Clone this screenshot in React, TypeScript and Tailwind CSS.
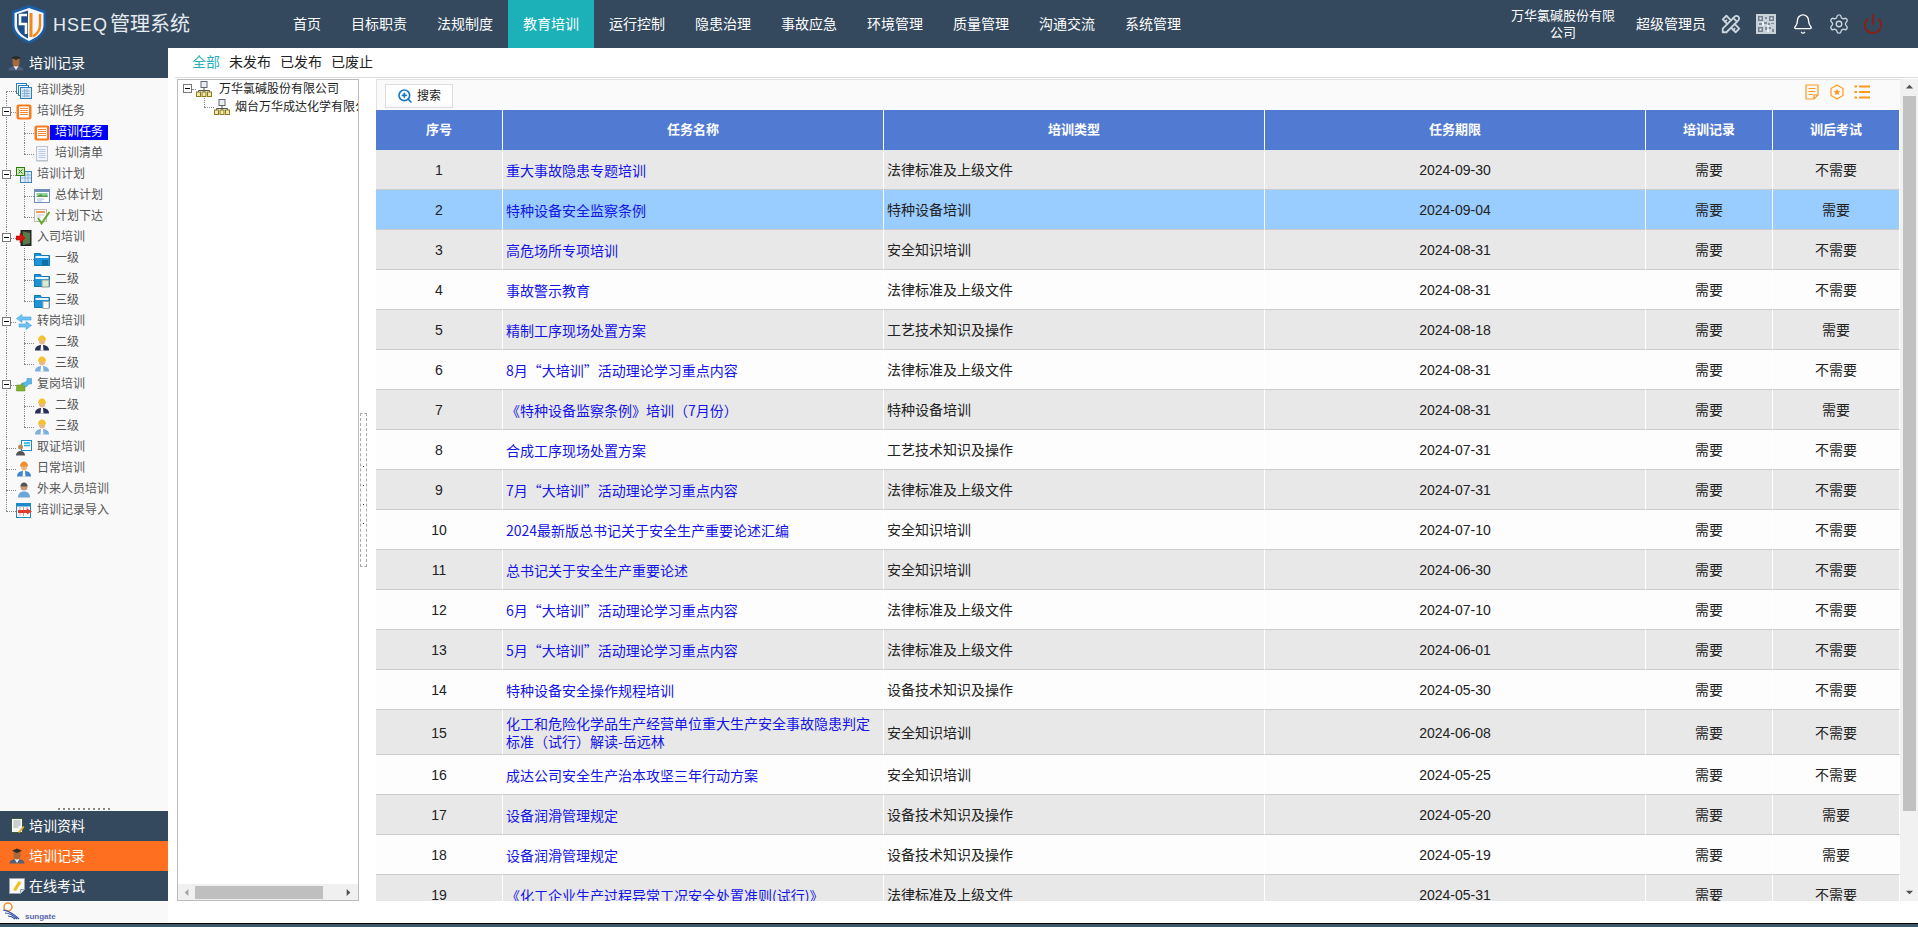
import type { ReactNode } from "react";
import { Bell, Power, Settings, ZoomIn } from "lucide-react";
import { TbTools } from "react-icons/tb";

const NAV = ["首页", "目标职责", "法规制度", "教育培训", "运行控制", "隐患治理", "事故应急", "环境管理", "质量管理", "沟通交流", "系统管理"];
const LAW = "法律标准及上级文件";
const SPECIAL = "特种设备培训";
const SAFE = "安全知识培训";
const CRAFT = "工艺技术知识及操作";
const EQUIP = "设备技术知识及操作";

// no, name, type, deadline, exam
const ROWS: [number, string, string, string, string][] = [
  [1, "重大事故隐患专题培训", LAW, "2024-09-30", "不需要"],
  [2, "特种设备安全监察条例", SPECIAL, "2024-09-04", "需要"],
  [3, "高危场所专项培训", SAFE, "2024-08-31", "不需要"],
  [4, "事故警示教育", LAW, "2024-08-31", "不需要"],
  [5, "精制工序现场处置方案", CRAFT, "2024-08-18", "需要"],
  [6, "8月“大培训”活动理论学习重点内容", LAW, "2024-08-31", "不需要"],
  [7, "《特种设备监察条例》培训（7月份）", SPECIAL, "2024-08-31", "需要"],
  [8, "合成工序现场处置方案", CRAFT, "2024-07-31", "不需要"],
  [9, "7月“大培训”活动理论学习重点内容", LAW, "2024-07-31", "不需要"],
  [10, "2024最新版总书记关于安全生产重要论述汇编", SAFE, "2024-07-10", "不需要"],
  [11, "总书记关于安全生产重要论述", SAFE, "2024-06-30", "不需要"],
  [12, "6月“大培训”活动理论学习重点内容", LAW, "2024-07-10", "不需要"],
  [13, "5月“大培训”活动理论学习重点内容", LAW, "2024-06-01", "不需要"],
  [14, "特种设备安全操作规程培训", EQUIP, "2024-05-30", "不需要"],
  [15, "化工和危险化学品生产经营单位重大生产安全事故隐患判定标准（试行）解读-岳远林", SAFE, "2024-06-08", "不需要"],
  [16, "成达公司安全生产治本攻坚三年行动方案", SAFE, "2024-05-25", "不需要"],
  [17, "设备润滑管理规定", EQUIP, "2024-05-20", "需要"],
  [18, "设备润滑管理规定", EQUIP, "2024-05-19", "需要"],
  [19, "《化工企业生产过程异常工况安全处置准则(试行)》", LAW, "2024-05-31", "不需要"],
];

function Ico({ children }: { children: ReactNode }) {
  return (
    <svg viewBox="0 0 16 16" className="h-4 w-4 shrink-0">
      {children}
    </svg>
  );
}

const StackIcon = () => (
  <Ico>
    <rect x="0.5" y="0.5" width="10" height="10" fill="#fff" stroke="#2f7fb8" />
    <rect x="2.5" y="2.5" width="10" height="10" fill="#fff" stroke="#2f7fb8" />
    <rect x="4.5" y="4.5" width="11" height="11" fill="#dbe8f6" stroke="#2f7fb8" />
    <path d="M6 8h8M6 10.5h8M6 13h8M8.5 6v8M11 6v8" stroke="#7ea6d4" strokeWidth="0.8" />
  </Ico>
);
const TaskIcon = () => (
  <Ico>
    <rect x="0.5" y="0.5" width="15" height="15" rx="2" fill="#ff7a1a" />
    <rect x="3" y="2.5" width="10" height="11" fill="#fff" />
    <path d="M4 4.5h8M4 6.5h8M4 8.5h8M4 10.5h8" stroke="#f08a3c" />
  </Ico>
);
const ListIcon = () => (
  <Ico>
    <rect x="2.5" y="0.5" width="11" height="14" fill="#f2f5fb" stroke="#b8c4d4" />
    <path d="M4.5 3.5h7M4.5 5.5h7M4.5 7.5h7M4.5 9.5h7M4.5 11.5h7" stroke="#b9cbe6" />
    <path d="M2 15.5h12" stroke="#ddd" />
  </Ico>
);
const ExcelIcon = () => (
  <Ico>
    <rect x="4.5" y="4.5" width="11" height="11" fill="#e3eefa" stroke="#3f86b8" />
    <path d="M5 8h10M5 11h10M9 5v10M12 5v10" stroke="#7ea6d4" strokeWidth="0.8" />
    <rect x="0.5" y="0.5" width="8" height="8" fill="#cfe8b8" stroke="#2f7a12" />
    <path d="M2.5 2.5l4 4M6.5 2.5l-4 4" stroke="#2f7a12" />
  </Ico>
);
const PicIcon = () => (
  <Ico>
    <rect x="0.5" y="1.5" width="15" height="13" fill="#fff" stroke="#6f8fb8" />
    <rect x="1" y="2" width="14" height="2" fill="#6f8fb8" />
    <rect x="2.5" y="5" width="11" height="4" fill="#8fd0a0" />
    <path d="M2.5 9l4-3 3 2 4-1v2z" fill="#5a9a40" />
    <path d="M3 11h7M3 13h5" stroke="#a8bcd8" />
  </Ico>
);
const CheckIcon = () => (
  <Ico>
    <rect x="0.5" y="0.5" width="12" height="12" fill="#fafafa" stroke="#bbb" />
    <path d="M2 3h9" stroke="#e87722" strokeWidth="1.5" />
    <path d="M2.5 6h8M2.5 8h4" stroke="#ccc" />
    <path d="M4 9l3.5 5.5L15.5 3" fill="none" stroke="#6aa82c" strokeWidth="2" />
  </Ico>
);
const DoorIcon = () => (
  <Ico>
    <rect x="5" y="0.5" width="10" height="15" fill="#2d3a2d" stroke="#222" />
    <path d="M7 1.5l7 1.5v10l-7 2z" fill="#5a7a4a" />
    <path d="M0 6h4V3l5 5-5 5v-3H0z" fill="#e01010" stroke="#a00" strokeWidth="0.5" />
  </Ico>
);
function FolderIcon({ v }: { v: number }) {
  return (
    <Ico>
      <path d="M0.5 2.5h6l1 2h8v10h-15z" fill="#1d94d8" stroke="#1478b0" />
      <rect x="1.5" y="5" width="13" height="2" fill="#e8f5fc" />
      {v === 1 && <rect x="8" y="9" width="6" height="5" fill="#0f6fa8" />}
      {v === 2 && <rect x="8" y="8" width="7" height="7" fill="#d8ecd0" stroke="#999" />}
      {v === 3 && <rect x="9" y="8.5" width="6" height="7" fill="#fafafa" stroke="#aaa" />}
    </Ico>
  );
}
const SwapIcon = () => (
  <Ico>
    <path d="M6 0.5L0.5 4.5 6 8.5V6h9V3H6z" fill="#6cc2f2" stroke="#3fa4e0" strokeWidth="0.6" />
    <path d="M10 7.5l5.5 4-5.5 4V13H3v-3h7z" fill="#6cc2f2" stroke="#3fa4e0" strokeWidth="0.6" />
  </Ico>
);
function WorkerIcon({ body, hat = "#f2c230" }: { body: string; hat?: string }) {
  return (
    <Ico>
      <path d="M1 15.5c0-4 3-5.5 7-5.5s7 1.5 7 5.5z" fill={body} />
      <path d="M7 10h2l.5 5.5h-3z" fill="#fff" />
      <circle cx="8" cy="6.5" r="3" fill="#e8b88a" />
      <path d="M4 5.5C4 2 6 0.5 8 0.5s4 1.5 4 5z" fill={hat} />
    </Ico>
  );
}
const GreenSwapIcon = () => (
  <Ico>
    <path d="M0.5 8h4L6 6h3v8H0.5z" fill="#7fb02e" stroke="#5a8a1a" strokeWidth="0.5" />
    <path d="M6 7l5-3V1.5h4.5V7H13l-3 3z" fill="#5bb8e8" stroke="#2a8ac8" strokeWidth="0.5" />
  </Ico>
);
const CertIcon = () => (
  <Ico>
    <rect x="5.5" y="0.5" width="10" height="10" fill="#fff" stroke="#1d8ac8" />
    <path d="M8 3h6M8 5.5h6" stroke="#1db0d8" strokeWidth="1.4" />
    <circle cx="4.5" cy="7" r="2.5" fill="#b98a5a" />
    <path d="M0 15.5c0-3 2-4.5 4.5-4.5S9 12.5 9 15.5z" fill="#555" />
  </Ico>
);
const PersonIcon = () => (
  <Ico>
    <path d="M2 15.5c0-4 2.5-6 6-6s6 2 6 6z" fill="#6ba6d8" />
    <circle cx="8" cy="5" r="3.5" fill="#c89a78" />
    <path d="M4.5 4.5C4.5 2 6 0.5 8 0.5s3.5 1.5 3.5 4z" fill="#555" />
  </Ico>
);
const ImportIcon = () => (
  <Ico>
    <rect x="0.5" y="0.5" width="14" height="14" fill="#fff" stroke="#1d8ac8" />
    <rect x="1" y="1" width="13" height="2.5" fill="#1d8ac8" />
    <path d="M4 4v3M7.5 4v3M11 4v3" stroke="#e09090" />
    <rect x="2" y="7" width="9" height="3" fill="#e23b2e" />
    <path d="M11 5.5l5 3-5 3z" fill="#e23b2e" />
    <path d="M4 10v3M7.5 10v3" stroke="#e09090" />
  </Ico>
);
const OrgIcon = () => (
  <Ico>
    <rect x="5" y="0.5" width="6" height="6" fill="#e8eef5" stroke="#667" />
    <path d="M8 6.5v3M2.5 11V9.5h11V11M8 9.5V11" fill="none" stroke="#555" />
    <rect x="0.5" y="11" width="4" height="4.5" fill="#f2e9a8" stroke="#8a7a20" />
    <rect x="6" y="11" width="4" height="4.5" fill="#f2e9a8" stroke="#8a7a20" />
    <rect x="11.5" y="11" width="4" height="4.5" fill="#f2e9a8" stroke="#8a7a20" />
  </Ico>
);
const GradIcon = () => (
  <Ico>
    <path d="M0.5 15.5c0-3 3-4.5 7.5-4.5s7.5 1.5 7.5 4.5z" fill="#51607c" />
    <path d="M5.5 11h5L8 15z" fill="#f2f2f2" />
    <path d="M4.5 4h7v4.5c0 2-1.5 3-3.500 3s-3.500-1-3.500-3z" fill="#a86a3c" />
    <path d="M3 2.800L8 0.500l5 2.300-5 2.200z" fill="#2b2b2b" />
  </Ico>
);
const NotebookIcon = () => (
  <Ico>
    <rect x="2.5" y="0.5" width="11" height="14" fill="#f4f6f2" stroke="#3a5a3a" />
    <path d="M4.5 3h7M4.5 5h7M4.5 7h7M4.5 9h5" stroke="#9aa" />
    <path d="M9 14l5-6 1.5 1-5 6z" fill="#e8b030" />
  </Ico>
);
const ExamIcon = () => (
  <Ico>
    <path d="M0.5 0.5h15v11l-4 4h-11z" fill="#fbfbfb" stroke="#9aa4b0" />
    <path d="M4 12L9.5 3l3 1.5L7 13z" fill="#f3c01c" />
    <path d="M11.5 15.5v-4h4" fill="#ddd" stroke="#9aa4b0" />
  </Ico>
);

type TreeItem = { lv: 0 | 1; label: string; icon: ReactNode; box?: boolean; last?: boolean; sel?: boolean };

const DarkWorker = <WorkerIcon body="#27305a" />;
const LightWorker = <WorkerIcon body="#7fb0dc" />;

const TREE: TreeItem[] = [
  { lv: 0, label: "培训类别", icon: <StackIcon /> },
  { lv: 0, label: "培训任务", icon: <TaskIcon />, box: true },
  { lv: 1, label: "培训任务", icon: <TaskIcon />, sel: true },
  { lv: 1, label: "培训清单", icon: <ListIcon />, last: true },
  { lv: 0, label: "培训计划", icon: <ExcelIcon />, box: true },
  { lv: 1, label: "总体计划", icon: <PicIcon /> },
  { lv: 1, label: "计划下达", icon: <CheckIcon />, last: true },
  { lv: 0, label: "入司培训", icon: <DoorIcon />, box: true },
  { lv: 1, label: "一级", icon: <FolderIcon v={1} /> },
  { lv: 1, label: "二级", icon: <FolderIcon v={2} /> },
  { lv: 1, label: "三级", icon: <FolderIcon v={3} />, last: true },
  { lv: 0, label: "转岗培训", icon: <SwapIcon />, box: true },
  { lv: 1, label: "二级", icon: DarkWorker },
  { lv: 1, label: "三级", icon: LightWorker, last: true },
  { lv: 0, label: "复岗培训", icon: <GreenSwapIcon />, box: true },
  { lv: 1, label: "二级", icon: DarkWorker },
  { lv: 1, label: "三级", icon: LightWorker, last: true },
  { lv: 0, label: "取证培训", icon: <CertIcon /> },
  { lv: 0, label: "日常培训", icon: <WorkerIcon body="#3f86c8" hat="#f09030" /> },
  { lv: 0, label: "外来人员培训", icon: <PersonIcon /> },
  { lv: 0, label: "培训记录导入", icon: <ImportIcon /> },
];

function ExpandBox({ className }: { className: string }) {
  return (
    <span className={`absolute flex h-[9px] w-[9px] items-center justify-center border border-[#777] bg-white ${className}`}>
      <span className="h-px w-[5px] bg-black" />
    </span>
  );
}

function TreeRow({ item, index }: { item: TreeItem; index: number }) {
  const isFirst = index === 0;
  const isLast = index === TREE.length - 1;
  return (
    <div className={`relative flex h-[21px] items-center ${item.lv === 0 ? "pl-[16px]" : "pl-[34px]"}`}>
      <span className={`absolute left-[6px] border-l border-dotted border-[#888] ${isFirst ? "top-1/2" : "top-0"} ${isLast ? "bottom-1/2" : "bottom-0"}`} />
      {item.lv === 0 && <span className="absolute left-[6px] top-1/2 w-[10px] border-t border-dotted border-[#888]" />}
      {item.lv === 1 && (
        <>
          <span className={`absolute left-[24px] top-0 border-l border-dotted border-[#888] ${item.last ? "bottom-1/2" : "bottom-0"}`} />
          <span className="absolute left-[24px] top-1/2 w-[10px] border-t border-dotted border-[#888]" />
        </>
      )}
      {item.box && <ExpandBox className="left-[2px] top-[6px]" />}
      {item.icon}
      {item.sel ? (
        <span className="bg-[#0000ff] px-[5px] text-[12px] leading-[15px] text-white">{item.label}</span>
      ) : (
        <span className="ml-[5px] text-[12px] leading-[15px] text-[#555]">{item.label}</span>
      )}
    </div>
  );
}

function Logo() {
  return (
    <svg viewBox="5 3 35 40" className="ml-[12px] h-[40px] w-[35px] shrink-0">
      <path d="M22 4L39 10V24C39 33 31 39 22 42.500C13 39 5 33 5 24V10Z" fill="#1b5ea8" />
      <path d="M22 7L36.500 12V24C36.500 31.500 30 36.500 22 40C14 36.500 7.500 31.500 7.500 24V12Z" fill="#f4f7fb" />
      <path d="M21 9.500L10 13V24C10 30 15 34.500 21 37.500Z" fill="#1d4f8c" />
      <path d="M20 14H13V23H19V33" fill="none" stroke="#fff" strokeWidth="2.600" />
      <path d="M24 12V36" stroke="#f08a14" strokeWidth="3" />
      <path d="M33 13V24C33 29 30 33 26 35.500" fill="none" stroke="#f08a14" strokeWidth="2.400" />
    </svg>
  );
}

function QrIcon() {
  return (
    <svg viewBox="0 0 20 20" className="ml-[14px] h-5 w-5 shrink-0">
      <rect width="20" height="20" fill="#c9d1d9" />
      <path d="M2 2h5v5H2zM13 2h5v5h-5zM2 13h5v5H2z" fill="#6f7f8f" />
      <path d="M3.500 3.500h2v2h-2zM14.500 3.500h2v2h-2zM3.500 14.500h2v2h-2z" fill="#e8ecef" />
      <path d="M9 3h2v2H9zM8 8h3v2H8zM12 9h2v2h-2zM3 9h3v2H3zM9 13h2v3H9zM13 13h2v2h-2zM16 15h2v3h-2zM15 9h3v1h-3z" fill="#7f8d9b" />
      <path d="M6 8h2v4H6zM11 11h2v2h-2zM11 15h2v3h-2z" fill="#eef1f3" />
    </svg>
  );
}

function ScrollArrow({ dir }: { dir: "up" | "down" | "left" | "right" }) {
  const d = { up: "M1 6l4-4 4 4z", down: "M1 3l4 4 4-4z", left: "M6 1L2 5l4 4z", right: "M3 1l4 4-4 4z" }[dir];
  return (
    <svg viewBox="0 0 10 10" className="h-[9px] w-[9px] shrink-0">
      <path d={d} fill={dir === "left" ? "#a3a3a3" : "#505050"} />
    </svg>
  );
}

function Splitter() {
  return (
    <div className="w-[17px] shrink-0 pl-[1px] pt-[334px]">
      <div className="flex h-[154px] w-[7px] flex-col items-center gap-[18px] border border-dashed border-[#aaa] pt-[52px]">
        <span className="h-px w-px shrink-0 bg-[#333]" />
        <span className="h-px w-px shrink-0 bg-[#333]" />
        <span className="h-px w-px shrink-0 bg-[#333]" />
        <span className="h-px w-px shrink-0 bg-[#333]" />
      </div>
    </div>
  );
}

function Sidebar() {
  return (
    <aside className="flex w-[168px] shrink-0 flex-col bg-[#f9f9f9]">
      <div className="flex h-[30px] shrink-0 items-center gap-[5px] bg-[#34495e] pl-[8px] text-[14px] text-white">
        <GradIcon />
        培训记录
      </div>
      <div className="flex-1 pt-[2px]">
        {TREE.map((item, i) => (
          <TreeRow key={i} item={item} index={i} />
        ))}
      </div>
      <div className="mb-[1px] flex justify-center gap-[3px]">
        {[0, 1, 2, 3, 4, 5, 6, 7, 8, 9, 10].map((i) => (
          <span key={i} className="h-[2px] w-[2px] bg-[#888]" />
        ))}
      </div>
      <div className="flex h-[30px] shrink-0 items-center gap-[4px] bg-[#34495e] pl-[9px] text-[14px] text-white">
        <NotebookIcon />
        培训资料
      </div>
      <div className="flex h-[30px] shrink-0 items-center gap-[4px] bg-[#ff6f20] pl-[9px] text-[14px] text-white">
        <GradIcon />
        培训记录
      </div>
      <div className="flex h-[30px] shrink-0 items-center gap-[4px] bg-[#34495e] pl-[9px] text-[14px] text-white">
        <ExamIcon />
        在线考试
      </div>
      <div className="flex h-[22px] shrink-0 items-end pb-[2px] pl-[2px]">
        <svg viewBox="0 0 22 20" className="h-[20px] w-[22px]">
          <circle cx="6" cy="6" r="4" fill="none" stroke="#f08a30" strokeWidth="1.4" />
          <path d="M1 9c6 1 10 3 16 9M3 12c5 0 8 2 12 6M6 15c3 0 5 1 7 3" fill="none" stroke="#2f4fa8" strokeWidth="1.2" />
        </svg>
        <span className="ml-px text-[8px] font-bold leading-[9px] text-[#5a6aa8]">sungate</span>
      </div>
    </aside>
  );
}

function OrgPane() {
  return (
    <div className="ml-[9px] flex w-[182px] shrink-0 flex-col border border-[#bbb] bg-white">
      <div className="flex-1 overflow-hidden whitespace-nowrap text-[12px] text-[#222]">
        <div className="relative flex h-[18px] items-center pl-[18px]">
          <ExpandBox className="left-[5px] top-[4px]" />
          <span className="absolute left-[14px] top-1/2 w-[4px] border-t border-dotted border-[#888]" />
          <OrgIcon />
          <span className="ml-[7px]">万华氯碱股份有限公司</span>
        </div>
        <div className="relative flex h-[18px] items-center pl-[36px]">
          <span className="absolute bottom-1/2 left-[26px] top-0 border-l border-dotted border-[#888]" />
          <span className="absolute left-[26px] top-1/2 w-[10px] border-t border-dotted border-[#888]" />
          <OrgIcon />
          <span className="ml-[5px]">烟台万华成达化学有限公司</span>
        </div>
      </div>
      <div className="flex h-[16px] shrink-0 items-center bg-[#f0f0f0] pl-[5px] pr-[5px]">
        <ScrollArrow dir="left" />
        <span className="ml-[3px] h-[13px] w-[128px] bg-[#bfbfbf]" />
        <span className="flex-1" />
        <ScrollArrow dir="right" />
      </div>
    </div>
  );
}

function TaskTable() {
  const th = "h-10 border-r border-white bg-[#517ad3] text-center text-[13px] font-bold text-white";
  const td = "border-b border-r border-b-[#ccc] border-r-white pt-[2px] text-center";
  return (
    <table className="w-[1524px] table-fixed border-separate border-spacing-0 text-[14px] text-[#222]">
      <colgroup>
        <col className="w-[127px]" />
        <col className="w-[381px]" />
        <col className="w-[381px]" />
        <col className="w-[381px]" />
        <col className="w-[127px]" />
        <col className="w-[127px]" />
      </colgroup>
      <thead>
        <tr>
          {["序号", "任务名称", "培训类型", "任务期限", "培训记录", "训后考试"].map((h) => (
            <th key={h} className={th}>
              {h}
            </th>
          ))}
        </tr>
      </thead>
      <tbody>
        {ROWS.map(([no, name, type, due, exam]) => (
          <tr key={no} className={no === 2 ? "bg-[#99ccff]" : no % 2 === 1 ? "bg-[#e8e8e8]" : "bg-[#fdfdfd]"}>
            <td className={`h-10 ${td}`}>{no}</td>
            <td className="border-b border-r border-b-[#ccc] border-r-white px-[3px] py-[4px] font-['Noto_Sans_CJK_SC',sans-serif] leading-[18px] text-[#1414e6]">
              {name}
            </td>
            <td className="border-b border-r border-b-[#ccc] border-r-white px-[3px] pt-[2px]">{type}</td>
            <td className={td}>{due}</td>
            <td className={td}>需要</td>
            <td className={td}>{exam}</td>
          </tr>
        ))}
      </tbody>
    </table>
  );
}

export default function App() {
  return (
    <div className="flex h-screen w-full flex-col overflow-hidden bg-white font-['Liberation_Sans','Noto_Sans_CJK_SC',sans-serif]">
      <header className="flex h-12 shrink-0 items-center bg-[#34495e] text-white">
        <Logo />
        <div className="ml-[6px] w-[225px] shrink-0 whitespace-nowrap text-[20px] leading-none text-[#e6ebf0]">
          <span className="text-[18px] tracking-[1px]">HSEQ</span>
          <span className="ml-[2px]">管理系统</span>
        </div>
        <nav className="flex h-full text-[14px]">
          {NAV.map((n) => (
            <a key={n} className={`flex h-full items-center px-[15px] ${n === "教育培训" ? "bg-[#1cb1b8]" : ""}`}>
              {n}
            </a>
          ))}
        </nav>
        <div className="ml-auto w-[112px] text-center text-[13px] leading-[17px]">万华氯碱股份有限公司</div>
        <div className="ml-[17px] text-[14px]">超级管理员</div>
        <TbTools className="ml-[14px] h-[22px] w-[22px] shrink-0 text-[#cdd5dc]" />
        <QrIcon />
        <Bell className="ml-[16px] h-[22px] w-[22px] shrink-0 text-white" strokeWidth={1.5} />
        <Settings className="ml-[14px] h-[22px] w-[22px] shrink-0 text-[#cdd5dc]" strokeWidth={1.5} />
        <Power className="ml-[12px] mr-[34px] h-[22px] w-[22px] shrink-0 text-[#8f1d10]" strokeWidth={2} />
      </header>

      <div className="flex min-h-0 flex-1">
        <Sidebar />
        <main className="flex min-w-0 flex-1 flex-col">
          <div className="ml-[7px] flex h-[30px] shrink-0 items-center gap-[9px] border-b border-[#ddd] pl-[17px] text-[14px] text-[#222]">
            <span className="text-[#2ab0b8]">全部</span>
            <span>未发布</span>
            <span>已发布</span>
            <span>已废止</span>
          </div>
          <div className="flex min-h-0 flex-1 pb-[22px] pt-[1px]">
            <OrgPane />
            <Splitter />
            <section className="flex min-w-0 flex-1">
              <div className="flex w-[1524px] shrink-0 flex-col">
                <div className="flex h-[31px] shrink-0 items-start justify-between border-l border-t border-[#e2e2e2] bg-[#fafafa] pl-[8px] pr-[30px] pt-[4px]">
                  <button className="flex h-[24px] w-[68px] items-center justify-center gap-[4px] border border-[#ddd] bg-white text-[12px] text-[#222]">
                    <ZoomIn className="h-[16px] w-[16px] text-[#1a78c2]" strokeWidth={2.5} />
                    搜索
                  </button>
                  <div className="flex items-center gap-[9px]">
                    <svg viewBox="0 0 16 16" className="h-4 w-4">
                      <path d="M2 1h12v10l-4 4H2z M10 15v-4h4 M4.500 4.500h7 M4.500 7.500h7 M4.500 10.500h4" fill="none" stroke="#ff9a1f" strokeWidth="1.2" />
                    </svg>
                    <svg viewBox="0 0 16 16" className="h-4 w-4">
                      <path d="M8 1l6 3.500v7L8 15l-6-3.500v-7z" fill="none" stroke="#ff9a1f" strokeWidth="1.2" />
                      <path d="M8 4.800l1 2.200 2.300.3-1.700 1.500.5 2.300L8 9.900l-2.100 1.200.5-2.300-1.700-1.500L7 7z" fill="#ff9a1f" />
                    </svg>
                    <svg viewBox="0 0 16 16" className="h-4 w-4">
                      <path d="M5 2.500h11M5 8h11M5 13.500h11M0.500 2.500h2.500M0.500 8h2.500M0.500 13.500h2.500" fill="none" stroke="#ff9a1f" strokeWidth="2" />
                    </svg>
                  </div>
                </div>
                <div className="min-h-0 flex-1 overflow-hidden">
                  <TaskTable />
                </div>
              </div>
              <div className="flex w-[18px] shrink-0 flex-col items-center bg-[#f1f1f1]">
                <div className="flex h-[17px] shrink-0 items-center">
                  <ScrollArrow dir="up" />
                </div>
                <div className="h-[715px] w-[13px] shrink-0 bg-[#c1c1c1]" />
                <div className="flex flex-1 items-end pb-[4px]">
                  <ScrollArrow dir="down" />
                </div>
              </div>
            </section>
          </div>
        </main>
      </div>

      <div className="h-[4px] shrink-0 border-t border-black bg-[#3c5a63]" />
    </div>
  );
}
